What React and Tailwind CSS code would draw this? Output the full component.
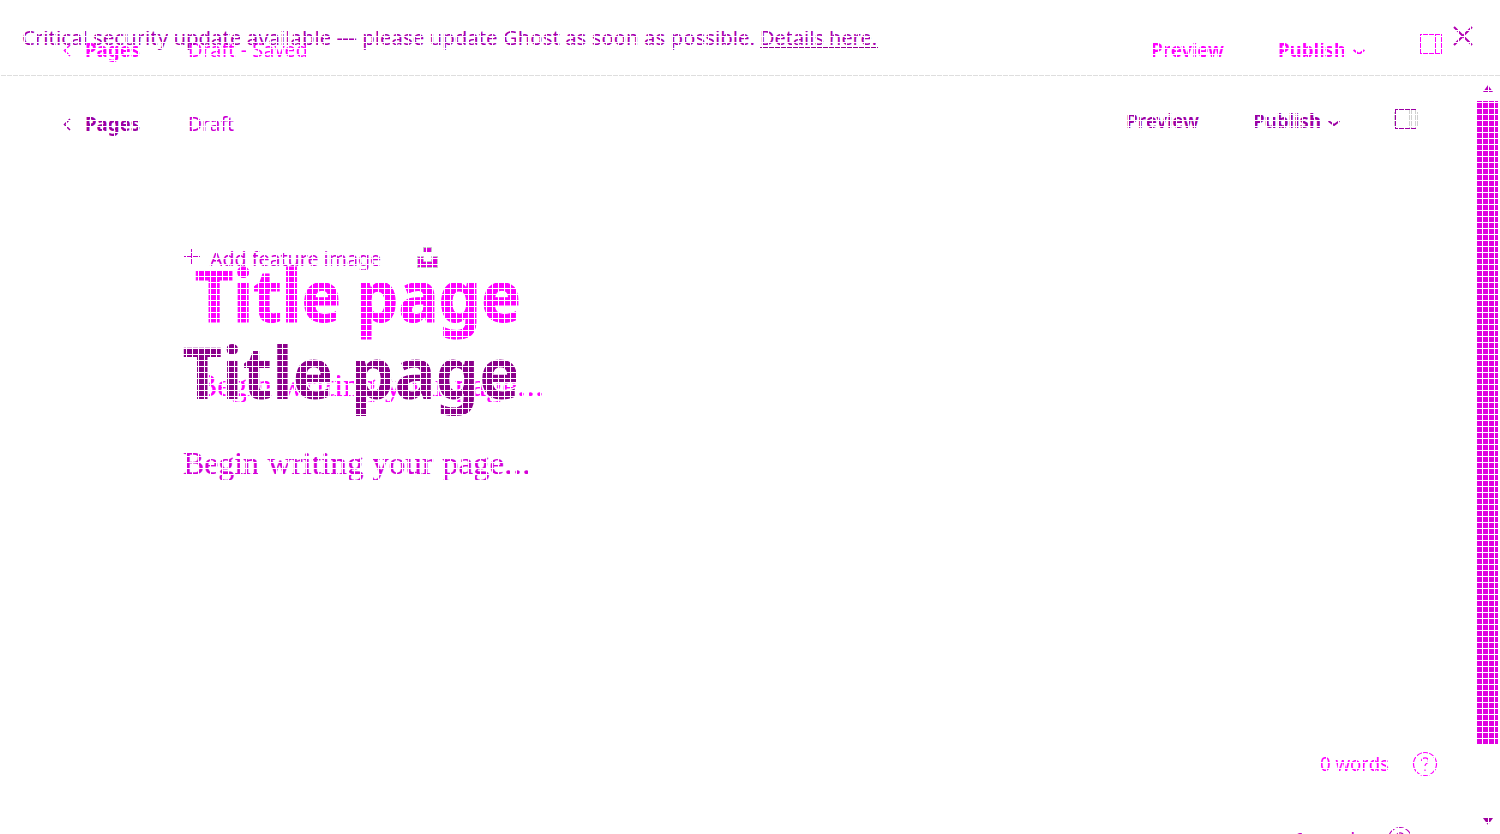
import React from "react";

const sans = "font-['Noto_Sans','Open_Sans',sans-serif]";

function Label({ x, y, width, size, weight = 400, color, children, serif, stroke, outline }) {
  return (
    <text
      x={x}
      y={y}
      textLength={width}
      lengthAdjust="spacingAndGlyphs"
      fontSize={size}
      fontWeight={weight}
      fill={color}
      stroke={outline || (stroke ? color : undefined)}
      strokeWidth={stroke}
      paintOrder="stroke"
      className={serif ? "font-['Liberation_Serif',serif]" : sans}
    >
      {children}
    </text>
  );
}

const promptWords = [
  ["Begin", 0, 76],
  ["writing", 84.5, 96],
  ["your", 189, 61],
  ["page", 259, 62],
  ["...", 321, 27],
];

function Prompt({ x, y, color }) {
  return promptWords.map(([word, offset, width]) => (
    <Label key={word} x={x + offset} y={y} width={width} size={32.5} color={color} stroke={0.2} serif>{word}</Label>
  ));
}

function Title({ x, pageX, y, width, pageWidth, color, outline }) {
  const style = { y, size: 71, weight: 700, color };
  return (
    <>
      {outline && <rect x={x + 16} y={y - 44} width="12" height="44" fill="white" />}
      <Label {...style} x={x} width={width} stroke={outline ? 2 : 1} outline={outline}>Title</Label>
      <Label {...style} x={pageX} width={pageWidth} stroke={outline ? 2 : 1} outline={outline}>page</Label>
    </>
  );
}

function Text({ className = "", width, size, height, baseline, weight, color, children }) {
  return (
    <svg width={width + 4} height={height} className={"block shrink-0 overflow-visible " + className}>
      <Label x={0} y={baseline} width={width} size={size} weight={weight} color={color}>
        {children}
      </Label>
    </svg>
  );
}

function Chevron({ className = "", color }) {
  return (
    <svg className={"block shrink-0 " + className} width="12" height="8" viewBox="0 0 12 8" fill="none" stroke={color} strokeWidth="2">
      <path d="M.5 1 6 5l5.5-4" />
    </svg>
  );
}

function Back({ color }) {
  return (
    <svg className="mt-[9px] block shrink-0" width="8" height="13" viewBox="0 0 8 13" fill="none" stroke={color} strokeWidth="1.5">
      <path d="M7 1 1.5 6.5 7 12" />
    </svg>
  );
}

function Sidebar({ color, halo }) {
  return (
    <svg className="block shrink-0" width="24" height="21" viewBox="0 0 24 21" fill="none" strokeWidth="1" shapeRendering="crispEdges">
      {halo ? (
        <>
          <path d="M.5 3v15M15.5 1v19M17.5 1v19M21.5 1v19M23.5 3v15" stroke={halo} />
          <path d="M22 .5H1.5v19H22" stroke={color} />
        </>
      ) : (
        <path d="M.5.5h21v19H.5zM15.5 1v18" stroke={color} />
      )}
    </svg>
  );
}

function Toolbar({ color, status, statusWidth, statusColor, halo, shifted }) {
  return (
    <div className={"flex h-[30px] items-start pl-[63px] " + (shifted ? "pr-[82px]" : "pr-[56px]")}>
      <Back color={color} />
      <Text className="ml-[13.5px]" width={55} size={19.5} height={30} baseline={22} weight={700} color={color}>Pages</Text>
      <Text className="ml-[44px]" width={statusWidth} size={19.5} height={30} baseline={22} color={statusColor}>{status}</Text>
      <div className={"ml-auto flex items-start " + (shifted ? "-mt-[3px]" : "mt-0")}>
        <Text width={73} size={19.5} height={30} baseline={22} weight={600} color={color}>Preview</Text>
        <Text className="ml-[50px]" width={68} size={19.5} height={30} baseline={22} weight={700} color={color}>Publish</Text>
        <Chevron className="ml-[3px] mt-[14px]" color={color} />
        <div className={shifted ? "ml-[54px] mt-[3px]" : "ml-[55px] -mt-[1px]"}><Sidebar color={color} halo={halo} /></div>
      </div>
    </div>
  );
}

function Help({ color }) {
  return (
    <svg className="block shrink-0" width="26" height="26" viewBox="0 0 26 26" fill="none" stroke={color} strokeWidth="1.2">
      <circle cx="13" cy="13" r="11.5" />
      <path d="M9.5 10c.3-4.2 7-4.2 7 0 0 2.7-3.5 2-3.5 5M13 18.5v1.5" />
    </svg>
  );
}

export default function App() {
  return (
    <main className={"relative flex h-[834px] w-[1500px] flex-col overflow-hidden bg-white " + sans}>
      <header className="relative h-[76px] shrink-0 border-b border-[#dedede] pt-[35px]">
        <Toolbar color="#ff00ff" status="Draft - Saved" statusWidth={120} statusColor="#ff00ff" />
        <div className="absolute inset-0 flex items-start pl-[22px]">
          <Text width={733} size={20.5} height={60} baseline={45} color="#a800b0">Critical security update available — please update Ghost as soon as possible.</Text>
          <div className="ml-[1px] mt-[25px] h-[23px] w-[118px] shrink-0 border-b border-[#900090]">
            <Text width={117} size={20.5} height={22} baseline={20} color="#a800b0">Details here.</Text>
          </div>
          <svg className="ml-auto mr-[27px] mt-[26px] block" width="20" height="20" viewBox="0 0 20 20" stroke="#b300b3" strokeWidth="2">
            <path d="m1 1 18 18M19 1 1 19" />
          </svg>
        </div>
      </header>

      <div className="flex min-h-0 flex-1">
        <section className="flex min-w-0 flex-1 flex-col">
          <div className="pt-[33px]">
            <Toolbar color="#9c00a4" status="Draft" statusWidth={46} statusColor="#cc00d2" halo="#d0d0d0" shifted />
          </div>
          <div className="mt-[107px] flex h-[26px] items-start pl-[183px]">
            <svg className="mt-[2px] block" width="17" height="18" stroke="#c500c9" strokeWidth="1" shapeRendering="crispEdges"><path d="M8.5 1v16M.5 8.5h16" /></svg>
            <Text className="ml-[10px]" width={171} size={19.5} height={26} baseline={20} color="#d000d5">Add feature image</Text>
            <svg className="ml-[32px] mt-[1px] block" width="21" height="21" fill="#dd00dd" stroke="#c4c4c4" strokeWidth="1">
              <path d="M6.5.5h8v5h-8zM.5 9.5h6v5h8v-5h6v11H.5z" />
            </svg>
          </div>
          <div className="relative h-[234px]">
            <svg className="block overflow-visible" width="1476" height="234">
              <Title x={195} pageX={356} y={50} width={146} pageWidth={165} color="#ff00ff" />
              <Prompt x={196} y={124} color="#ff00ff" />
              <Label x={182.5} y={127} width={151} size={71} weight={700} stroke={3} outline="white" color="#8b008b">Title</Label>
              <Label x={351} y={127} width={169} size={71} weight={700} stroke={3} outline="white" color="#8b008b">page</Label>
              <Prompt x={183} y={202} color="#d400d9" />
            </svg>
          </div>
          <footer className="mt-auto flex h-[83px] shrink-0 flex-col">
            <div className="flex h-[26px] items-start pl-[1320px]">
              <Text width={69} size={19.5} height={26} baseline={20} color="#ff00ff">0 words</Text>
              <div className="ml-[19px]"><Help color="#ff00ff" /></div>
            </div>
            <div className="mt-[49px] flex h-[8px] items-start overflow-hidden pl-[1295px]">
              <Text width={69} size={19.5} height={26} baseline={21} color="#c500c9">0 words</Text>
              <div className="ml-[19px]"><Help color="#b900bd" /></div>
            </div>
          </footer>
        </section>
        <aside className="-ml-[24px] flex w-[24px] shrink-0 flex-col items-center">
          <svg className="mt-[9px] block" width="10" height="7" fill="#b800bd"><path d="m5 0 5 7H0z" /></svg>
          <div className="mt-[9px] mr-[2px] h-[643px] w-[21px] bg-[#e000e0]" />
          <svg className="mt-auto mb-[9px] block" width="10" height="7" fill="#a000a0"><path d="M0 0h10L5 7z" /></svg>
        </aside>
      </div>
      <div className="pointer-events-none absolute inset-0 bg-[linear-gradient(to_right,white_1px,transparent_1px),linear-gradient(to_bottom,white_1px,transparent_1px)] bg-[length:6px_6px]" />
    </main>
  );
}
